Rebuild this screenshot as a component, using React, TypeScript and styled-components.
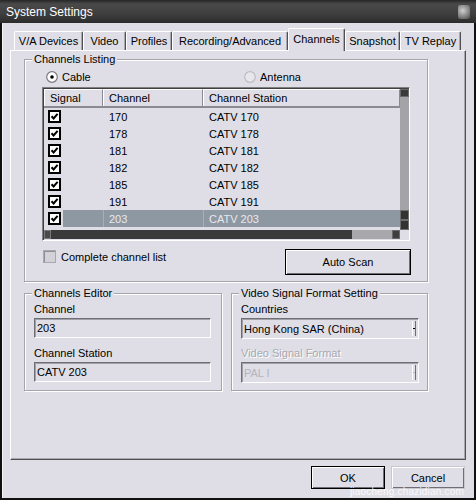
import React from "react";
import styled, { createGlobalStyle } from "styled-components";

const Global = createGlobalStyle`
  html, body { margin: 0; padding: 0; background: #ffffff; }
  body { font-family: "Liberation Sans", Arial, sans-serif; font-size: 11px; color: #000; }
  #root { width: 476px; height: 500px; }
`;

const PANEL = "#dfdee6";

const Window = styled.div`
  width: 476px;
  height: 500px;
  display: flex;
  flex-direction: column;
  background: ${PANEL};
  overflow: hidden;
`;

const TitleBar = styled.div`
  height: 23px;
  flex: none;
  display: flex;
  align-items: center;
  justify-content: space-between;
  padding: 0 6px 0 6px;
  background: linear-gradient(#262626 0px, #4a4a4a 4px, #3e3e3e 14px, #2c2c2c 23px);
  color: #fff;
  font-size: 12px;
`;

const TitleIcon = styled.div`
  width: 12px;
  height: 14px;
  border-radius: 2px;
  background: radial-gradient(circle at 40% 40%, #e8e8e8, #8a8a8a 60%, #4a4a4a);
  opacity: 0.85;
`;

const Frame = styled.div`
  flex: 1;
  display: flex;
  flex-direction: column;
  border-left: 2px solid #111;
  border-right: 2px solid #111;
  border-bottom: 2px solid #111;
  padding: 5px 8px 0 8px;
  box-shadow: inset 1px 0 0 #f4f4f4;
`;

const TabStrip = styled.div`
  height: 22px;
  display: flex;
  align-items: flex-end;
  padding-left: 4px;
  white-space: nowrap;
`;

const Tab = styled.div<{ $active?: boolean; $w: number }>`
  width: ${(p) => p.$w}px;
  flex: none;
  box-sizing: border-box;
  display: flex;
  align-items: center;
  justify-content: center;
  white-space: nowrap;
  padding-bottom: ${(p) => (p.$active ? "2px" : "0")};
  border-top: 1px solid #ffffff;
  border-left: 1px solid #ffffff;
  border-right: 1px solid #505050;
  border-radius: 2px 2px 0 0;
  box-shadow: inset -1px 0 0 #a8a8b0;
  background: ${PANEL};
  position: relative;
  z-index: ${(p) => (p.$active ? 2 : 1)};
  margin-bottom: ${(p) => (p.$active ? "-1px" : "0")};
  height: ${(p) => (p.$active ? "23px" : "19px")};
`;

const TabPanel = styled.div`
  height: 410px;
  box-sizing: border-box;
  border-top: 1px solid #ffffff;
  border-left: 1px solid #ffffff;
  border-right: 1px solid #505050;
  border-bottom: 1px solid #505050;
  box-shadow: inset -1px -1px 0 #a8a8b0;
  padding: 8px 0 0 13px;
  display: flex;
  flex-direction: column;
  gap: 11px;
`;

const Group = styled.div<{ $w: number }>`
  position: relative;
  width: ${(p) => p.$w}px;
  box-sizing: border-box;
  border: 1px solid #a4a4ac;
  box-shadow: inset 1px 1px 0 #ffffff, 1px 1px 0 #ffffff;
`;

const Caption = styled.span`
  position: absolute;
  top: -8px;
  left: 7px;
  padding: 0 2px;
  line-height: 14px;
  background: ${PANEL};
  white-space: nowrap;
`;

const ListingBody = styled.div`
  padding: 10px 16px 6px 17px;
  display: flex;
  flex-direction: column;
`;

const RadioRow = styled.div`
  display: grid;
  grid-template-columns: 198px 1fr;
  padding-left: 4px;
  height: 13px;
`;

const RadioItem = styled.label`
  display: flex;
  align-items: center;
  gap: 4px;
`;

const ListBox = styled.div`
  margin-top: 4px;
  width: 368px;
  height: 154px;
  box-sizing: border-box;
  border-top: 1px solid #808080;
  border-left: 1px solid #808080;
  border-right: 1px solid #ffffff;
  border-bottom: 1px solid #ffffff;
  box-shadow: inset 1px 1px 0 #404040;
  display: grid;
  grid-template-columns: 1fr 9px;
  grid-template-rows: 1fr 9px;
  padding: 1px 0 1px 1px;
`;

const ListMain = styled.div`
  display: flex;
  flex-direction: column;
  overflow: hidden;
`;

const Header = styled.div`
  display: grid;
  grid-template-columns: 59px 100px 1fr;
  height: 17px;
  border-bottom: 2px solid #8a8a92;
`;

const HeaderCell = styled.div`
  display: flex;
  align-items: center;
  padding-left: 5px;
  border-left: 1px solid #ffffff;
  border-right: 1px solid #8a8a92;
  border-top: 1px solid #ffffff;
`;

const Row = styled.div<{ $sel?: boolean }>`
  display: grid;
  grid-template-columns: 59px 100px 1fr;
  height: 17px;
  color: ${(p) => (p.$sel ? "#e8e8ec" : "#000")};
`;

const SignalCell = styled.div<{ $sel?: boolean }>`
  display: flex;
  align-items: center;
  padding-left: 4px;
  gap: 2px;
  &::after {
    content: "";
    flex: 1;
    align-self: stretch;
    background: ${(p) => (p.$sel ? "#8e98a2" : "transparent")};
  }
`;

const Cell = styled.div<{ $sel?: boolean }>`
  display: flex;
  align-items: center;
  padding-left: 6px;
  background: ${(p) => (p.$sel ? "#8e98a2" : "transparent")};
  box-shadow: ${(p) => (p.$sel ? "inset 1px 0 0 #a6b0ba" : "none")};
`;

const VScroll = styled.div`
  display: flex;
  flex-direction: column;
  background: #a4a4a8;
`;

const VTop = styled.div`
  height: 8px;
  background: #3a3a3a;
  border: 1px solid #6a6a6a;
  box-sizing: border-box;
`;

const VTrack = styled.div`
  flex: 1;
`;

const VThumb = styled.div`
  height: 10px;
  background: #333;
  border: 1px solid #6e6e6e;
  box-sizing: border-box;
`;

const HScroll = styled.div`
  display: flex;
  background: #a8a8ac;
`;

const HThumb = styled.div`
  width: 308px;
  background: #3a3a3a;
  display: flex;
`;

const HCap = styled.div`
  width: 7px;
  background: #4a4a4a;
  border: 1px solid #7a7a7a;
  box-sizing: border-box;
`;

const HTrack = styled.div`
  flex: 1;
`;

const HEnd = styled.div`
  width: 8px;
  background: #3e3e3e;
  border: 1px solid #6a6a6a;
  box-sizing: border-box;
`;

const Corner = styled.div`
  background: ${PANEL};
`;

const BottomRow = styled.div`
  margin-top: 8px;
  display: flex;
  justify-content: space-between;
  align-items: flex-start;
  padding-left: 1px;
`;

const CheckLabel = styled.label`
  display: flex;
  align-items: center;
  gap: 5px;
  margin-top: 1px;
  height: 13px;
`;

const FlatBox = styled.span`
  width: 13px;
  height: 13px;
  box-sizing: border-box;
  border: 1px solid #a8a8ae;
  background: #d2d2d8;
  box-shadow: inset 1px 1px 0 #8e8e94;
`;

const Button = styled.button<{ $default?: boolean; $w: number; $h: number }>`
  width: ${(p) => p.$w}px;
  height: ${(p) => p.$h}px;
  font: inherit;
  color: #000;
  background: ${PANEL};
  border: 1px solid ${(p) => (p.$default ? "#000" : "#c8c8ce")};
  box-shadow: inset 1px 1px 0 #ffffff, inset -1px -1px 0 #6e6e74;
  padding: 0;
`;

const EditRow = styled.div`
  display: flex;
  gap: 9px;
`;

const FieldBody = styled.div`
  padding: 9px 10px 7px 9px;
  display: flex;
  flex-direction: column;
`;

const Label = styled.div<{ $disabled?: boolean; $gap?: number }>`
  line-height: 13px;
  margin-top: ${(p) => p.$gap ?? 0}px;
  color: ${(p) => (p.$disabled ? "#a8a8b0" : "#000")};
  text-shadow: ${(p) => (p.$disabled ? "1px 1px 0 #fff" : "none")};
`;

const TextBox = styled.div`
  margin-top: 2px;
  width: 177px;
  height: 20px;
  box-sizing: border-box;
  display: flex;
  align-items: center;
  padding-left: 2px;
  border-top: 1px solid #6e6e74;
  border-left: 1px solid #6e6e74;
  border-right: 1px solid #ffffff;
  border-bottom: 1px solid #ffffff;
  box-shadow: inset 1px 1px 0 #a0a0a8;
`;

const Select = styled.div<{ $disabled?: boolean }>`
  margin-top: 2px;
  width: 178px;
  height: 21px;
  box-sizing: border-box;
  display: flex;
  align-items: center;
  padding-left: 2px;
  border-top: 1px solid #6e6e74;
  border-left: 1px solid #6e6e74;
  border-right: 1px solid #ffffff;
  border-bottom: 1px solid #ffffff;
  box-shadow: inset 1px 1px 0 #a0a0a8;
  color: ${(p) => (p.$disabled ? "#b4b4bc" : "#000")};
`;

const SelectText = styled.span`
  flex: 1;
`;

const Arrow = styled.span<{ $disabled?: boolean }>`
  width: 4px;
  height: 15px;
  margin-right: 2px;
  box-sizing: border-box;
  border-left: 1px solid #ffffff;
  border-right: 1px solid #6e6e74;
  display: flex;
  align-items: center;
  justify-content: center;
  &::after {
    content: "";
    width: 2px;
    height: 1px;
    background: ${(p) => (p.$disabled ? "#b4b4bc" : "#000")};
  }
`;

const ButtonBar = styled.div`
  margin-top: 6px;
  display: flex;
  justify-content: flex-end;
  gap: 6px;
  padding-right: 1px;
  position: relative;
`;

const Watermark = styled.span`
  position: absolute;
  right: 2px;
  top: 20px;
  font-size: 10px;
  color: rgba(255, 255, 255, 0.85);
  letter-spacing: 0.2px;
`;

const CheckedBox = () => (
  <svg width="13" height="13" viewBox="0 0 13 13">
    <rect x="1" y="1" width="11" height="11" fill="#fff" stroke="#000" strokeWidth="2" />
    <path d="M3.5 6.2 L5.6 8.4 L9.6 3.8" fill="none" stroke="#000" strokeWidth="2" />
  </svg>
);

const Radio = ({ on }: { on?: boolean }) => (
  <svg width="12" height="12" viewBox="0 0 12 12">
    <circle cx="6" cy="6" r="5.3" fill={on ? "#fff" : "#e8e8ec"} stroke={on ? "#7a7a80" : "#bcbcc2"} strokeWidth="1.2" />
    {on && <circle cx="6" cy="6" r="1.8" fill="#000" />}
  </svg>
);

const tabs = [
  { t: "V/A Devices", w: 69 },
  { t: "Video", w: 43 },
  { t: "Profiles", w: 46 },
  { t: "Recording/Advanced", w: 116 },
  { t: "Channels", w: 57, active: true },
  { t: "Snapshot", w: 55 },
  { t: "TV Replay", w: 61 },
];

const rows = [
  { ch: "170" },
  { ch: "178" },
  { ch: "181" },
  { ch: "182" },
  { ch: "185" },
  { ch: "191" },
  { ch: "203", sel: true },
];

export default function App() {
  return (
    <>
      <Global />
      <Window>
        <TitleBar>
          <span>System Settings</span>
          <TitleIcon />
        </TitleBar>
        <Frame>
          <TabStrip>
            {tabs.map((t) => (
              <Tab key={t.t} $w={t.w} $active={t.active}>
                {t.t}
              </Tab>
            ))}
          </TabStrip>
          <TabPanel>
            <Group $w={404}>
              <Caption>Channels Listing</Caption>
              <ListingBody>
                <RadioRow>
                  <RadioItem>
                    <Radio on />
                    Cable
                  </RadioItem>
                  <RadioItem>
                    <Radio />
                    Antenna
                  </RadioItem>
                </RadioRow>
                <ListBox>
                  <ListMain>
                    <Header>
                      <HeaderCell>Signal</HeaderCell>
                      <HeaderCell>Channel</HeaderCell>
                      <HeaderCell>Channel Station</HeaderCell>
                    </Header>
                    {rows.map((r) => (
                      <Row key={r.ch} $sel={r.sel}>
                        <SignalCell $sel={r.sel}>
                          <CheckedBox />
                        </SignalCell>
                        <Cell $sel={r.sel}>{r.ch}</Cell>
                        <Cell $sel={r.sel}>CATV {r.ch}</Cell>
                      </Row>
                    ))}
                  </ListMain>
                  <VScroll>
                    <VTop />
                    <VTrack />
                    <VThumb />
                    <VThumb />
                  </VScroll>
                  <HScroll>
                    <HThumb>
                      <HCap />
                    </HThumb>
                    <HTrack />
                    <HEnd />
                  </HScroll>
                  <Corner />
                </ListBox>
                <BottomRow>
                  <CheckLabel>
                    <FlatBox />
                    Complete channel list
                  </CheckLabel>
                  <Button $w={126} $h={26} $default>
                    Auto Scan
                  </Button>
                </BottomRow>
              </ListingBody>
            </Group>
            <EditRow>
              <Group $w={198}>
                <Caption>Channels Editor</Caption>
                <FieldBody>
                  <Label>Channel</Label>
                  <TextBox>203</TextBox>
                  <Label $gap={9}>Channel Station</Label>
                  <TextBox>CATV 203</TextBox>
                </FieldBody>
              </Group>
              <Group $w={197}>
                <Caption>Video Signal Format Setting</Caption>
                <FieldBody>
                  <Label>Countries</Label>
                  <Select>
                    <SelectText>Hong Kong SAR (China)</SelectText>
                    <Arrow />
                  </Select>
                  <Label $gap={8} $disabled>
                    Video Signal Format
                  </Label>
                  <Select $disabled>
                    <SelectText>PAL I</SelectText>
                    <Arrow $disabled />
                  </Select>
                </FieldBody>
              </Group>
            </EditRow>
          </TabPanel>
          <ButtonBar>
            <Button $w={74} $h={23} $default>
              OK
            </Button>
            <Button $w={74} $h={23}>
              Cancel
            </Button>
            <Watermark>jiaocheng.chazidian.com</Watermark>
          </ButtonBar>
        </Frame>
      </Window>
    </>
  );
}
